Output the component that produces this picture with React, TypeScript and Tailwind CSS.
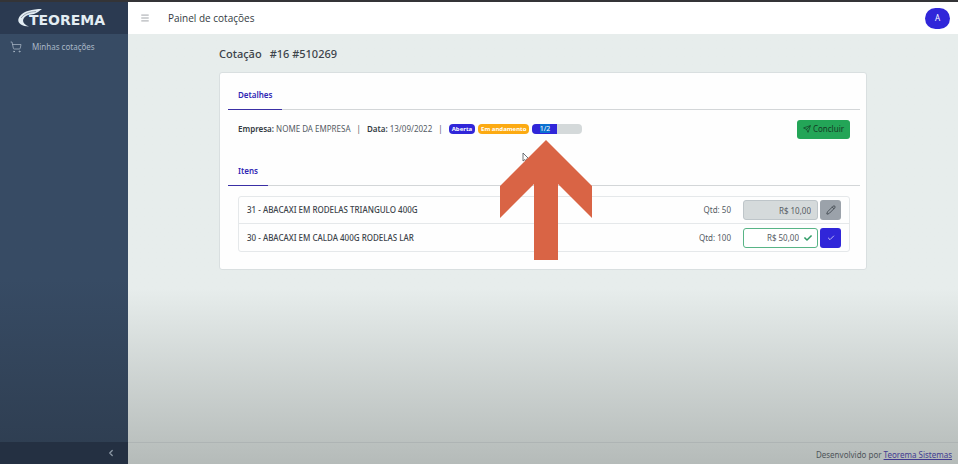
import { ChevronLeft, Menu, Pencil, Send, ShoppingCart } from 'lucide-react'
import type { ReactNode } from 'react'
import { FaCheck } from 'react-icons/fa'
import { FiCheck } from 'react-icons/fi'

const items = [
    { id: 31, name: 'ABACAXI EM RODELAS TRIANGULO 400G', amount: 50, price: 'R$ 10,00', confirmed: true },
    { id: 30, name: 'ABACAXI EM CALDA 400G RODELAS LAR', amount: 100, price: 'R$ 50,00', confirmed: false },
]

function Logo() {
    return (
        <svg viewBox="0 0 94 20" className="h-5 w-[94px]" role="img" aria-label="Teorema">
            <path
                d="M25 1C15 1 7 3 3 8C-1 13 2 18 12 18.500C6 16 5 13 7 10C9 7 13 6.500 17 6C20 5 22 3 25 1Z"
                fill="#e3edf3"
            />
            <path d="M4 10C8 5 13 4 19 3.500" fill="none" stroke="#2c3b52" strokeWidth="0.4" />
            <text
                x="12"
                y="17"
                fill="#e3edf3"
                fontSize="14"
                fontWeight="700"
                fontFamily="'DejaVu Sans', sans-serif"
            >
                TEOREMA
            </text>
        </svg>
    )
}

function Sidebar() {
    return (
        <aside className="flex w-32 shrink-0 flex-col bg-linear-to-b from-[#374b64] from-60% to-[#2e3d50]">
            <div className="flex h-8 items-center justify-center bg-[#2b3a51]">
                <Logo />
            </div>
            <nav className="flex-1">
                <a href="#cotacoes" className="flex h-[26px] items-center gap-2.5 px-2.5 text-[8px] text-[#a9b7c6]">
                    <ShoppingCart className="h-3 w-3" strokeWidth={1.5} />
                    Minhas cotações
                </a>
            </nav>
            <button aria-label="Recolher menu" className="flex h-[22px] items-center justify-end bg-[#243042] px-3">
                <ChevronLeft className="h-2.5 w-2.5 text-[#8d99a6]" strokeWidth={3} />
            </button>
        </aside>
    )
}

function SectionTab({ children }: { children: ReactNode }) {
    return (
        <div className="flex border-b border-[#d3d6d8]">
            <h2 className="-mb-px border-b border-[#3a2fa5] px-2.5 pb-2 text-[8px] leading-3 font-semibold text-[#3026b4]">
                {children}
            </h2>
        </div>
    )
}

function Progress() {
    return (
        <div className="relative">
            <div className="flex h-2.5 w-[50px] overflow-hidden rounded-sm bg-[#d4d9da]">
                <div className="w-1/2 bg-[#3026d9] text-center text-[7px] leading-2.5 text-white">
                    <span className="bg-[#0b70d0]">1/2</span>
                </div>
            </div>
            <svg viewBox="0 0 8 12" className="absolute top-7 -left-2.5 h-3 w-2" aria-hidden="true">
                <path d="M1 1V9L3 7.500 4.500 10 5.500 9.500 4.500 7H7Z" fill="#fff" stroke="#4b5157" strokeWidth="0.8" />
            </svg>
            <svg viewBox="0 0 92 120" className="absolute top-4 -left-8 h-[120px] w-[92px]" aria-hidden="true">
                <path d="M46 0 92 46V78L58 44V120H34V44L0 78V46Z" fill="#d96445" />
            </svg>
        </div>
    )
}

function Item({ item }: { item: (typeof items)[number] }) {
    return (
        <li className="flex h-[27px] items-center px-2 text-[8px] text-[#555c64]">
            <span className="flex-1 font-medium text-[#3c434a]">
                {item.id} - {item.name}
            </span>
            <label htmlFor={`price-${item.id}`} className="mr-3">
                Qtd: {item.amount}
            </label>
            <div className="relative mr-0.5">
                <input
                    id={`price-${item.id}`}
                    defaultValue={item.price}
                    disabled={item.confirmed}
                    className={
                        item.confirmed
                            ? 'block h-5 w-[75px] rounded-[3px] border border-[#bec5c9] bg-[#d5dadb] pr-1.5 text-right'
                            : 'block h-5 w-[75px] rounded-[3px] border border-[#58b486] bg-white pr-[18px] text-right'
                    }
                />
                {!item.confirmed && (
                    <FaCheck className="absolute top-1.5 right-1.5 h-2 w-2 text-[#2f9c66]" />
                )}
            </div>
            {item.confirmed ? (
                <button
                    aria-label="Editar"
                    className="flex h-5 w-[21px] items-center justify-center rounded-[3px] bg-[#9ba2aa] text-[#3b4249]"
                >
                    <Pencil className="h-2.5 w-2.5" />
                </button>
            ) : (
                <button
                    aria-label="Confirmar"
                    className="flex h-5 w-[21px] items-center justify-center rounded-[3px] bg-[#3026d9] text-white"
                >
                    <FiCheck className="h-2 w-2" />
                </button>
            )}
        </li>
    )
}

export default function App() {
    return (
        <div className="flex min-h-screen flex-col bg-[#343437] pt-0.5 font-['Noto_Sans','Open_Sans',sans-serif] text-[8px] text-[#555c64]">
            <div className="flex flex-1">
                <Sidebar />
                <div className="flex min-w-0 flex-1 flex-col bg-linear-to-b from-[#e7edec] from-62% to-[#b5bbb9]">
                    <header className="flex h-8 items-center bg-white pr-2 pl-3">
                        <button aria-label="Menu">
                            <Menu className="h-2.5 w-2.5 text-[#6b7178]" strokeWidth={1.5} />
                        </button>
                        <h1 className="ml-[18px] flex-1 font-['Open_Sans',sans-serif] text-[10px] font-medium text-[#343b42]">
                            Painel de cotações
                        </h1>
                        <button className="h-[21px] w-[25px] rounded-full bg-[#3026d9] text-[8px] text-white">A</button>
                    </header>

                    <main className="mx-auto w-full max-w-[648px] flex-1">
                        <div className="flex h-[38px] items-center gap-2 pt-0.5 text-[11px] font-medium text-[#3c434a]">
                            <span>Cotação</span>
                            <span>#16 #510269</span>
                        </div>
                        <div className="rounded-[3px] border border-[#d9dfe0] bg-[#fefefe] pt-4 pr-1.5 pb-[17px] pl-2">
                            <SectionTab>Detalhes</SectionTab>
                            <div className="mt-[9px] flex h-5 items-center justify-between px-2.5">
                                <div className="flex items-center">
                                    <span>
                                        <b className="font-semibold text-[#343b42]">Empresa:</b> NOME DA EMPRESA
                                    </span>
                                    <span className="mx-1.5">|</span>
                                    <span>
                                        <b className="font-semibold text-[#343b42]">Data:</b> 13/09/2022
                                    </span>
                                    <span className="mx-1.5">|</span>
                                    <span className="mr-[3px] rounded-sm bg-[#3026d9] px-[3px] text-[6px] leading-2.5 font-bold text-white">
                                        Aberta
                                    </span>
                                    <span className="mr-[3px] rounded-sm bg-[#fcaa12] px-[3px] text-[6px] leading-2.5 font-bold text-white">
                                        Em andamento
                                    </span>
                                    <Progress />
                                </div>
                                <button className="flex h-[19px] items-center gap-0.5 rounded-[3px] bg-[#23a557] px-1.5 text-[8px] text-[#153a25]">
                                    <Send className="h-2 w-2" />
                                    Concluir
                                </button>
                            </div>

                            <div className="mt-[26px]">
                                <SectionTab>Itens</SectionTab>
                            </div>
                            <ul className="mx-2.5 mt-2.5 divide-y divide-[#e5e8ea] rounded-[3px] border border-[#e5e8ea]">
                                {items.map((item) => (
                                    <Item key={item.id} item={item} />
                                ))}
                            </ul>
                        </div>
                    </main>

                    <footer className="flex h-[22px] items-center justify-end gap-0.5 border-t border-[#aeb4b4] px-1.5 pt-0.5 text-[8px] text-[#4e555a]">
                        Desenvolvido por
                        <a href="#teorema" className="text-[#423b91] underline">
                            Teorema Sistemas
                        </a>
                    </footer>
                </div>
            </div>
        </div>
    )
}
